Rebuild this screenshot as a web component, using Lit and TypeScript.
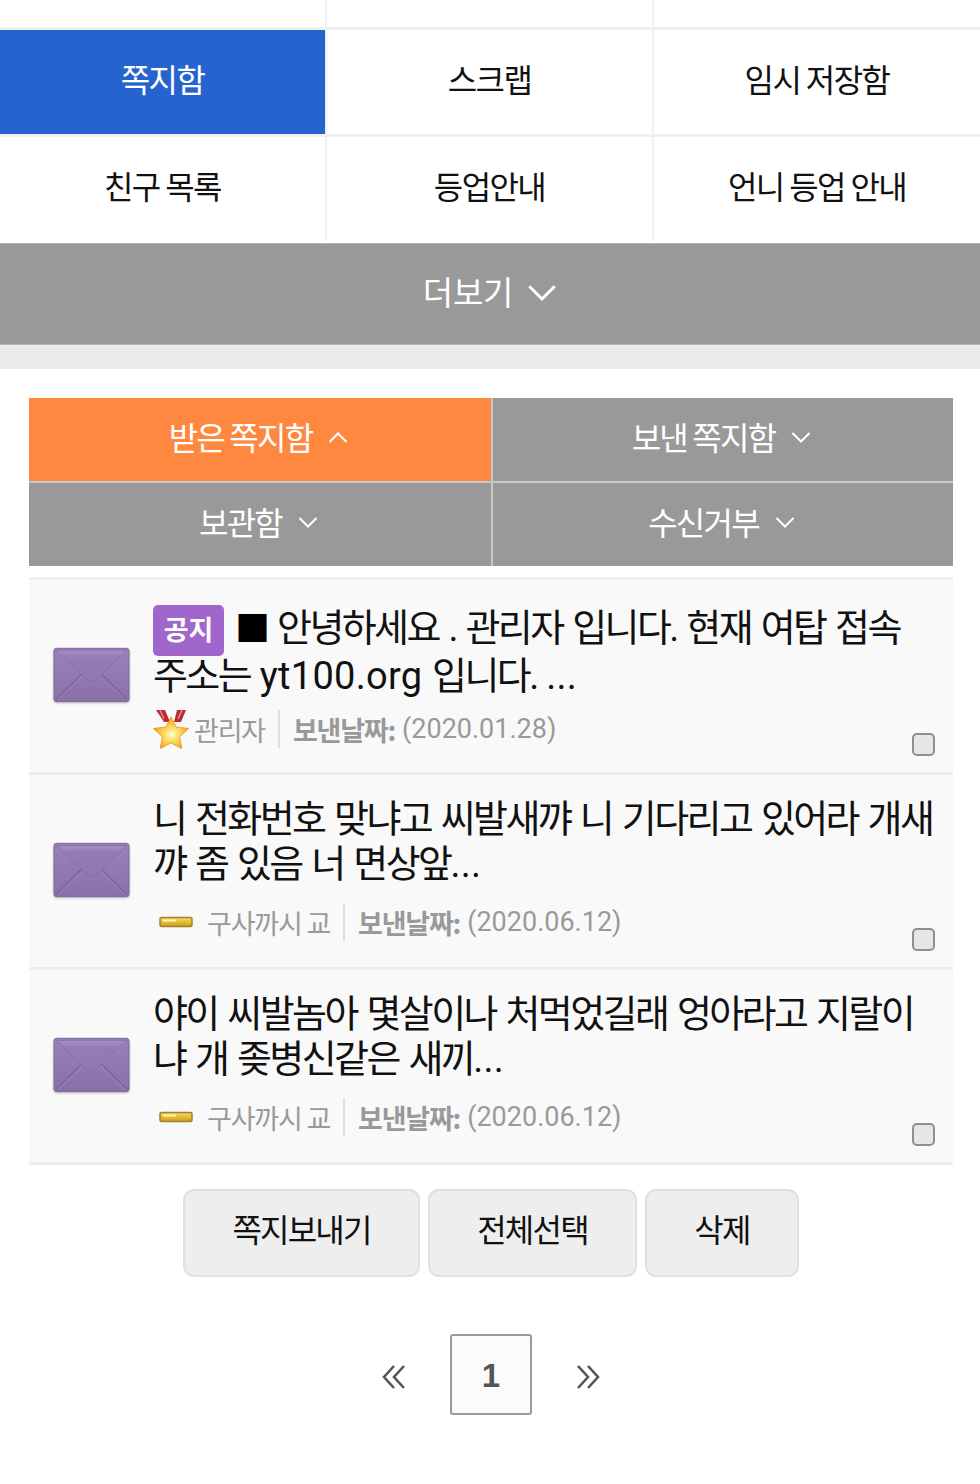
import {LitElement, html, css, svg} from 'lit';
import {customElement} from 'lit/decorators.js';

interface Message {
  title: unknown;
  level: 'star' | 'bar';
  author: string;
  date: string;
}

const chevron = (up = false) => html`
  <svg class="chev" viewBox="0 0 20 12" aria-hidden="true">
    <path d=${up ? 'M1.5 10.5 10 2l8.5 8.5' : 'M1.5 1.5 10 10l8.5-8.5'} fill="none" stroke="currentColor" stroke-width="2"/>
  </svg>
`;

const envelope = html`
  <svg class="envelope" viewBox="0 0 78 56" aria-hidden="true">
    <defs>
      <linearGradient id="env" x1="0" y1="0" x2="0" y2="1">
        <stop offset="0" stop-color="#9a81bb"/>
        <stop offset="1" stop-color="#8a70a9"/>
      </linearGradient>
      <linearGradient id="flap" x1="0" y1="0" x2="0" y2="1">
        <stop offset="0" stop-color="#a68fc6"/>
        <stop offset="0.25" stop-color="#957bb6"/>
        <stop offset="1" stop-color="#9277b3"/>
      </linearGradient>
    </defs>
    <rect x="1" y="1" width="76" height="54" rx="2.500" fill="url(#env)" stroke="#7f6a9c" stroke-width="1"/>
    <path d="M3 53 29 27M75 53 49 27" fill="none" stroke="#7c629b" stroke-width="1.200"/>
    <path d="M5 53 30 29M73 53 48 29" fill="none" stroke="#a189c0" stroke-width="0.800"/>
    <path d="M3 3h72L44 32q-5 4-10 0z" fill="url(#flap)" stroke="#856aa4" stroke-width="0.800"/>
  </svg>
`;

const medal = svg`
  <defs>
    <radialGradient id="star" cx="0.52" cy="0.55" r="0.55">
      <stop offset="0" stop-color="#fffbe0"/>
      <stop offset="0.35" stop-color="#fde26a"/>
      <stop offset="1" stop-color="#f39a1c"/>
    </radialGradient>
  </defs>
  <path d="M3 0h9l5 12h-6zM24 0h9l-5 12h-7z" fill="#b92d35"/>
  <path d="M7 0l4 9M29 0l-4 9" stroke="#e8888c" stroke-width="1.500"/>
  <path d="M18 7l5 10 12.500 1.500-9 8.500 2.400 11.500L18 33 7.100 38.500l2.400-11.500-9-8.500L13 17z" fill="url(#star)" stroke="#ec8d12" stroke-width="0.800"/>
`;

const MESSAGES: Message[] = [
  {
    title: html`<span class="notice">공지</span><span class="square">■</span> 안녕하세요 . 관리자 입니다. 현재 여탑 접속 주소는 <span class="latin">yt100.org</span> 입니다. <span class="dots">...</span>`,
    level: 'star',
    author: '관리자',
    date: '(2020.01.28)',
  },
  {
    title: html`니 전화번호 맞냐고 씨발새꺄 니 기다리고 있어라 개새꺄 좀 있음 너 면상앞<span class="dots">...</span>`,
    level: 'bar',
    author: '구사까시 교',
    date: '(2020.06.12)',
  },
  {
    title: html`야이 씨발놈아 몇살이나 처먹었길래 엉아라고 지랄이냐 개 좆병신같은 새끼<span class="dots">...</span>`,
    level: 'bar',
    author: '구사까시 교',
    date: '(2020.06.12)',
  },
];

@customElement('app-root')
export class AppRoot extends LitElement {
  static styles = css`
    :host {
      display: block;
      width: 980px;
      height: 1484px;
      overflow: hidden;
      background: #fff;
      color: #111;
      font-family: "Noto Sans CJK KR", "Liberation Sans", sans-serif;
      font-size: 32px;
    }

    /* top menu grid */
    .menu {
      display: grid;
      grid-template-columns: 325px 325px 1fr;
      grid-template-rows: 27px 104px 104px;
      column-gap: 2px;
      row-gap: 3px;
      background: #f0f0f2;
    }
    .menu__item {
      display: flex;
      align-items: center;
      justify-content: center;
      padding-bottom: 9px;
      background: #fff;
      letter-spacing: -1.600px;
    }
    .menu__item.is-active {
      background: #2763cf;
      color: #fff;
    }

    .more {
      display: flex;
      align-items: center;
      justify-content: center;
      height: 100px;
      box-sizing: content-box;
      margin-top: 2px;
      border-top: 1px solid #b5b5b5;
      border-bottom: 1px solid #b5b5b5;
      background: #999;
      color: #fff;
      font-size: 33px;
      letter-spacing: -0.2px;
    }
    .more__inner {
      display: flex;
      align-items: center;
      gap: 14px;
      margin-bottom: 7px;
    }
    .more .chev {
      width: 30px;
      height: 20px;
      margin-top: 5px;
    }
    .more-gap {
      height: 24px;
      background: #ebebeb;
    }

    .content {
      padding: 29px 27px 0 29px;
    }

    /* mailbox tabs */
    .tabs {
      display: grid;
      grid-template-columns: 462px 1fr;
      grid-template-rows: 83px 83px;
      gap: 2px;
      background: #c8c8c8;
    }
    .tab {
      display: flex;
      align-items: center;
      justify-content: center;
      gap: 16px;
      padding: 0 3px 8px 0;
      background: #999;
      color: #fff;
      letter-spacing: -1.800px;
    }
    .tab.is-open {
      background: #ff8840;
    }
    .tab .chev {
      width: 20px;
      height: 13px;
      margin-top: 3px;
    }

    /* message list */
    .list {
      margin-top: 11px;
      border-top: 3px solid #eeeeee;
    }
    .row {
      position: relative;
      display: flex;
      align-items: flex-start;
      height: 192px;
      border-bottom: 3px solid #eeeeee;
      background: #f9f9f9;
      box-sizing: content-box;
    }
    .row__icon {
      flex: none;
      align-self: center;
      width: 124px;
      padding: 0 0 3px 24px;
      box-sizing: border-box;
      line-height: 0;
    }
    .envelope {
      width: 77px;
      height: 56px;
      filter: drop-shadow(0 1px 1px rgba(0, 0, 0, 0.25));
    }
    .row__body {
      flex: 1;
      min-width: 0;
      padding: 22px 14px 0 0;
    }
    .title {
      font-family: "Roboto", "Noto Sans CJK KR", sans-serif;
      font-size: 38px;
      line-height: 45px;
      letter-spacing: -2.600px;
      word-spacing: 2.800px;
      color: #111;
    }
    .title--notice {
      margin-top: 3px;
      line-height: 47px;
    }
    .latin {
      letter-spacing: 0.3px;
    }
    .dots {
      letter-spacing: 0.3px;
    }
    .notice {
      display: inline-block;
      width: 71px;
      height: 51px;
      margin: -4px 11px -4px 0;
      border-radius: 5px;
      background: #a066cc;
      color: #fff;
      font-family: "Noto Sans CJK KR", sans-serif;
      font-size: 27px;
      font-weight: 700;
      line-height: 47px;
      text-align: center;
      letter-spacing: 0;
      word-spacing: 0;
      vertical-align: middle;
    }
    .square {
      font-size: 35px;
      color: #000;
    }
    .meta {
      display: flex;
      align-items: center;
      margin-top: 16px;
      height: 38px;
      color: #999;
      font-size: 27px;
      letter-spacing: -1.200px;
    }
    .meta--notice {
      margin-top: 10px;
    }
    .meta__level {
      flex: none;
      display: block;
    }
    .meta__level--star {
      width: 36px;
      height: 39px;
      margin-right: 5px;
    }
    .meta__level--bar {
      width: 34px;
      height: 14px;
      margin: 0 14px 0 6px;
      filter: blur(0.4px);
    }
    .meta__sep {
      width: 2px;
      height: 38px;
      margin: 0 13px;
      background: #dfdfdf;
    }
    .meta__label {
      font-weight: 700;
      margin-right: 7px;
    }
    .meta__date {
      letter-spacing: 0;
      font-family: "Roboto", "Noto Sans CJK KR", sans-serif;
    }
    .check {
      position: absolute;
      right: 18px;
      bottom: 16px;
      width: 23px;
      height: 23px;
      box-sizing: border-box;
      border: 2px solid #8f8f8f;
      border-radius: 5px;
      background: #e6e6e6;
    }

    /* action buttons */
    .actions {
      display: flex;
      justify-content: center;
      gap: 8px;
      margin-top: 24px;
    }
    .btn {
      display: flex;
      align-items: center;
      justify-content: center;
      height: 88px;
      padding-bottom: 10px;
      box-sizing: border-box;
      border: 2px solid #e0e0e0;
      border-radius: 11px;
      background: #eeeeee;
      color: #111;
      letter-spacing: -1.800px;
    }

    /* pagination */
    .pager {
      display: flex;
      align-items: center;
      justify-content: center;
      gap: 43px;
      margin-top: 57px;
    }
    .pager__arrow {
      width: 25px;
      height: 26px;
      margin-top: 5px;
      color: #555;
    }
    .pager__current {
      display: flex;
      align-items: center;
      justify-content: center;
      width: 82px;
      height: 81px;
      padding-top: 2px;
      box-sizing: border-box;
      border: 2px solid #9a9a9a;
      border-radius: 3px;
      background: #fbfbfb;
      color: #555;
      font-family: "Liberation Sans", sans-serif;
      font-size: 33px;
      font-weight: 700;
    }
  `;

  private renderLevel(level: Message['level']) {
    if (level === 'star') {
      return html`<svg class="meta__level meta__level--star" viewBox="0 0 36 39" aria-hidden="true">${medal}</svg>`;
    }
    return html`
      <svg class="meta__level meta__level--bar" viewBox="0 0 34 14" aria-hidden="true">
        <defs>
          <linearGradient id="bar" x1="0" y1="0" x2="0" y2="1">
            <stop offset="0" stop-color="#f8dc6a"/>
            <stop offset="1" stop-color="#d09c10"/>
          </linearGradient>
        </defs>
        <rect x="1" y="2.500" width="32" height="9" rx="1.500" fill="url(#bar)" stroke="#a08228" stroke-width="1.500"/>
        <rect x="4" y="4.500" width="13" height="2" fill="#fff3b5"/>
      </svg>
    `;
  }

  private renderRow(message: Message) {
    const isNotice = message.level === 'star';
    return html`
      <div class="row">
        <div class="row__icon">${envelope}</div>
        <div class="row__body">
          <div class="title ${isNotice ? 'title--notice' : ''}">${message.title}</div>
          <div class="meta ${isNotice ? 'meta--notice' : ''}">
            ${this.renderLevel(message.level)}
            <span>${message.author}</span>
            <span class="meta__sep"></span>
            <span class="meta__label">보낸날짜:</span>
            <span class="meta__date">${message.date}</span>
          </div>
        </div>
        <span class="check"></span>
      </div>
    `;
  }

  override render() {
    return html`
      <nav class="menu">
        <div class="menu__item"></div>
        <div class="menu__item"></div>
        <div class="menu__item"></div>
        <div class="menu__item is-active">쪽지함</div>
        <div class="menu__item">스크랩</div>
        <div class="menu__item">임시 저장함</div>
        <div class="menu__item">친구 목록</div>
        <div class="menu__item">등업안내</div>
        <div class="menu__item">언니 등업 안내</div>
      </nav>
      <div class="more"><div class="more__inner">더보기 ${chevron()}</div></div>
      <div class="more-gap"></div>

      <div class="content">
        <div class="tabs">
          <div class="tab is-open">받은 쪽지함 ${chevron(true)}</div>
          <div class="tab">보낸 쪽지함 ${chevron()}</div>
          <div class="tab">보관함 ${chevron()}</div>
          <div class="tab">수신거부 ${chevron()}</div>
        </div>

        <div class="list">
          ${MESSAGES.map((message) => this.renderRow(message))}
        </div>

        <div class="actions">
          <div class="btn" style="width:237px">쪽지보내기</div>
          <div class="btn" style="width:209px">전체선택</div>
          <div class="btn" style="width:154px">삭제</div>
        </div>

        <div class="pager">
          <svg class="pager__arrow" viewBox="0 0 25 26" aria-hidden="true">
            <path d="M12 2 2 13l10 11M22 2 12 13l10 11" fill="none" stroke="currentColor" stroke-width="2.600"/>
          </svg>
          <div class="pager__current">1</div>
          <svg class="pager__arrow" viewBox="0 0 25 26" aria-hidden="true">
            <path d="M3 2l10 11L3 24M13 2l10 11-10 11" fill="none" stroke="currentColor" stroke-width="2.600"/>
          </svg>
        </div>
      </div>
    `;
  }
}
